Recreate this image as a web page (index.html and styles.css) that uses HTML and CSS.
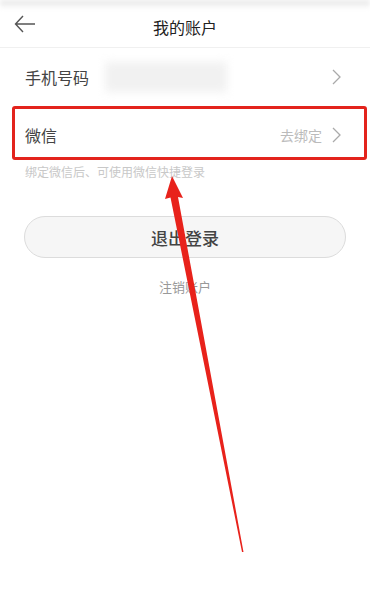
FILE: index.html
```html
<!DOCTYPE html>
<html lang="zh">
<head>
    <meta charset="UTF-8">
    <meta name="viewport" content="width=device-width, initial-scale=1.0">
    <title>我的账户</title>
    <link rel="stylesheet" href="styles.css">
</head>
<body>
    <div class="status"></div>

    <div class="nav">
        <svg class="back" width="22" height="18" viewBox="0 0 22 18">
            <path d="M9 1 L1.5 9 L9 17 M1.5 9 H21" fill="none" stroke="#555" stroke-width="1.4"/>
        </svg>
        <div class="title">我的账户</div>
    </div>

    <div class="list">
        <div class="row">
            <span class="label">手机号码</span>
            <span class="masked"></span>
            <span class="right">
                <svg class="chevron" width="9" height="16" viewBox="0 0 9 16">
                    <path d="M1 1 L8 8 L1 15" fill="none" stroke="#aaa" stroke-width="1.3"/>
                </svg>
            </span>
        </div>
        <div class="row">
            <span class="label">微信</span>
            <span class="right">
                <span class="hint-right">去绑定</span>
                <svg class="chevron" width="9" height="16" viewBox="0 0 9 16">
                    <path d="M1 1 L8 8 L1 15" fill="none" stroke="#aaa" stroke-width="1.3"/>
                </svg>
            </span>
        </div>
    </div>
    <p class="tip">绑定微信后、可使用微信快捷登录</p>

    <div class="actions">
        <button class="logout">退出登录</button>
        <div class="cancel">注销账户</div>
    </div>

    <!-- 标注 -->
    <div class="mark"></div>
    <svg class="pointer" width="370" height="600" viewBox="0 0 370 600">
        <polygon points="172,176 165,199 170.5,197.5 242,552 243.5,552 178,197 183,198" fill="#e8221b"/>
    </svg>
</body>
</html>
```

FILE: styles.css
```css
body {
    margin: 0;
    padding: 0;
    width: 370px;
    height: 600px;
    background: #fff;
    font-family: "Noto Sans CJK SC", sans-serif;
    color: #333;
    position: relative;
    overflow: hidden;
}

.status {
    height: 8px;
    background: linear-gradient(to bottom, #e6e6e6, #fafafa);
    filter: blur(2px);
}

.nav {
    height: 39px;
    display: flex;
    align-items: center;
    justify-content: center;
    position: relative;
    border-bottom: 1px solid #f0f0f0;
}

.back {
    position: absolute;
    left: 14px;
    top: 7px;
}

.title {
    font-size: 16px;
    color: #222;
    margin-top: -2px;
}

.row {
    height: 58px;
    display: flex;
    align-items: center;
    padding: 0 29px 0 25px;
    font-size: 16px;
}

.label {
    color: #444;
}

.masked {
    width: 122px;
    height: 30px;
    margin-left: 16px;
    background: #f1f1f1;
    filter: blur(5px);
}

.right {
    margin-left: auto;
    display: flex;
    align-items: center;
    gap: 10px;
}

.hint-right {
    color: #bbb;
    font-size: 14px;
}

.chevron {
    display: block;
}

.tip {
    margin: -1px 0 0 25px;
    font-size: 12px;
    color: #c8c8c8;
}

.actions {
    padding: 0 24px;
    margin-top: 36px;
    text-align: center;
}

.logout {
    width: 100%;
    height: 42px;
    border: 1px solid #dcdcdc;
    border-radius: 21px;
    background: #f6f6f6;
    font-family: "Noto Sans CJK SC", sans-serif;
    font-size: 17px;
    font-weight: 500;
    color: #444;
}

.cancel {
    margin-top: 19px;
    font-size: 13px;
    color: #999;
}

.mark {
    position: absolute;
    left: 12px;
    top: 106px;
    width: 349px;
    height: 48px;
    border: 3px solid #e3231c;
    border-radius: 3px;
}

.pointer {
    position: absolute;
    left: 0;
    top: 0;
}
```
